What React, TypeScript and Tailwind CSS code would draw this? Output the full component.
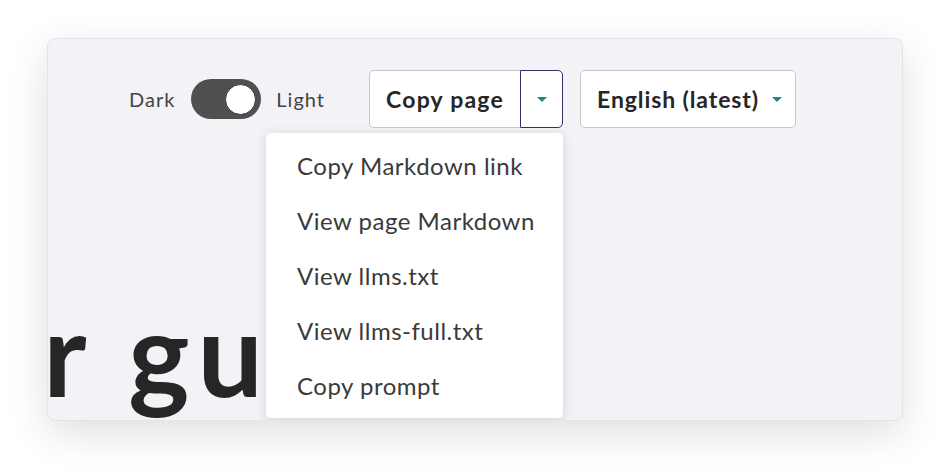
import { useState } from 'react'

const menuItems = [
  'Copy Markdown link',
  'View page Markdown',
  'View llms.txt',
  'View llms-full.txt',
  'Copy prompt',
]

function Caret() {
  return <span className="inline-block h-0 w-0 border-x-[5px] border-t-[5px] border-x-transparent border-t-[#1a8986]" />
}

export default function App() {
  const [light, setLight] = useState(true)

  return (
    <div className="min-h-screen w-full bg-white px-[47px] pt-[38px] font-['Lato',sans-serif]">
      <div className="relative h-[383px] w-[856px] overflow-hidden rounded-lg border border-[#e4e3e8] bg-[#f3f2f7] shadow-[0_12px_40px_rgba(0,0,0,0.13)]">
        {/* Toolbar */}
        <div className="flex items-center pl-[81px] pt-[31px]">
          <span className="text-[20px] tracking-[1px] text-[#444]">Dark</span>
          <button
            onClick={() => setLight(!light)}
            className="ml-[16px] flex h-[40px] w-[70px] items-center justify-end rounded-full bg-[#505050] pr-[5px]"
          >
            <span className="h-[31px] w-[31px] rounded-full border border-[#3a3a3a] bg-white" />
          </button>
          <span className="ml-[15px] text-[20px] tracking-[1px] text-[#444]">Light</span>

          {/* Copy page split button */}
          <div className="relative ml-[44px] flex h-[58px]">
            <button className="flex w-[151px] items-center justify-center rounded-l-[5px] border border-r-0 border-[#c8c7cd] bg-white text-[23px] font-bold tracking-[1.2px] text-[#262626]">
              Copy page
            </button>
            <button className="flex w-[43px] items-center justify-center rounded-r-[5px] border-[1.5px] border-[#3b2c6c] bg-white">
              <Caret />
            </button>

            {/* Dropdown menu */}
            <div className="absolute right-0 top-[63px] z-10 w-[297px] rounded-[5px] bg-white pb-[5px] pt-[5px] shadow-[0_2px_12px_rgba(0,0,0,0.14)]">
              {menuItems.map((item) => (
                <div key={item} className="flex h-[55px] items-center pl-[31px] text-[24px] tracking-[0.5px] text-[#3a3a3a]">
                  {item}
                </div>
              ))}
            </div>
          </div>

          <button className="ml-[17px] flex h-[58px] w-[216px] items-center gap-[13px] rounded-[5px] border border-[#c8c7cd] bg-white pl-[16px] text-[23px] font-bold tracking-[0.9px] text-[#262626]">
            English (latest)
            <Caret />
          </button>
        </div>

        {/* Page heading, clipped by the card */}
        <h1 className="ml-[-223px] mt-[167px] whitespace-nowrap text-[116px] font-bold leading-none tracking-[8px] text-[#262626]">
          Your guide
        </h1>
      </div>
    </div>
  )
}
